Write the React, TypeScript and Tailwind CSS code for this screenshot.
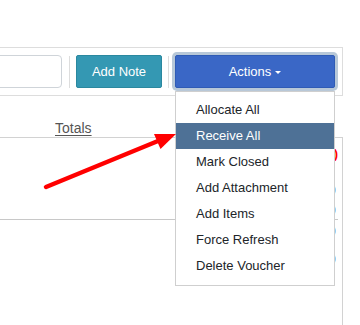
import React from "react";

const menuItems = [
  "Allocate All",
  "Receive All",
  "Mark Closed",
  "Add Attachment",
  "Add Items",
  "Force Refresh",
  "Delete Voucher",
];

function ActionsMenu() {
  return (
    <div className="relative ml-[6px]">
      <button className="flex h-[33px] w-[160px] items-center justify-center rounded-[2px] border border-[#2f5bb5] bg-[#3a67c6] text-[13px] text-white shadow-[0_0_0_3px_#b8c8d8]">
        Actions
        <span className="ml-[4px] mt-[1px] inline-block h-0 w-0 border-x-[3px] border-t-[3px] border-x-transparent border-t-white" />
      </button>
      <div className="absolute left-0 top-[calc(100%+3px)] z-10 w-[160px] border border-[#cfcfcf] bg-white pb-[6px] pt-[5px]">
        {menuItems.map((item) => (
          <div
            key={item}
            className={`flex h-[26px] items-center px-[20px] text-[13px] ${
              item === "Receive All" ? "bg-[#4e7196] text-white" : "text-[#212529]"
            }`}
          >
            {item}
          </div>
        ))}
      </div>
    </div>
  );
}

export default function App() {
  return (
    <div className="relative h-[325px] w-[360px] overflow-hidden bg-white font-['Liberation_Sans',Arial,sans-serif]">
      <div className="pt-[47px]">
        {/* Toolbar */}
        <div className="flex w-[343px] items-center border-y border-r border-[#dddddd] pb-[7px] pt-[7px]">
          <div className="ml-[-40px] h-[33px] w-[102px] rounded-[4px] border border-[#cfd4d9] bg-white" />
          <div className="ml-[7px] h-[32px] w-px bg-[#dddddd]" />
          <button className="ml-[6px] h-[33px] w-[86px] rounded-[2px] border border-[#2a889f] bg-[#3498b3] text-[13px] text-white">
            Add Note
          </button>
          <div className="ml-[6px] h-[32px] w-px bg-[#dddddd]" />
          <ActionsMenu />
        </div>

        {/* Header */}
        <div className="h-[41px] pl-[55px] pt-[20px]">
          <span className="text-[14px] leading-[16px] text-[#555555] underline underline-offset-2">Totals</span>
        </div>

        {/* Table */}
        <div className="h-[200px] w-[343px] border-r border-t border-[#d2d2d2]">
          <div className="w-[338px] border-b border-[#c8c8c8] pr-[2px] text-right text-[13px] leading-[20px]">
            <div className="mr-[-2px] pt-[6px] font-bold text-[#ff0000]">(1)</div>
            <div className="pt-[15px] text-[#555555]">(0)</div>
            <div className="text-[#555555]">(0)</div>
          </div>
          <div className="w-[338px] pr-[2px] text-right text-[13px] leading-[20px] text-[#555555]">
            <div>(0)</div>
            <div className="pt-[8px]">(0)</div>
          </div>
        </div>
      </div>

      {/* Annotation arrow */}
      <svg className="pointer-events-none absolute left-0 top-0 z-20" width="360" height="325">
        <line x1="46" y1="187" x2="158" y2="141" stroke="#ff0000" strokeWidth="4.5" strokeLinecap="round" />
        <polygon points="176,134 154,134 160.5,149" fill="#ff0000" />
      </svg>
    </div>
  );
}
